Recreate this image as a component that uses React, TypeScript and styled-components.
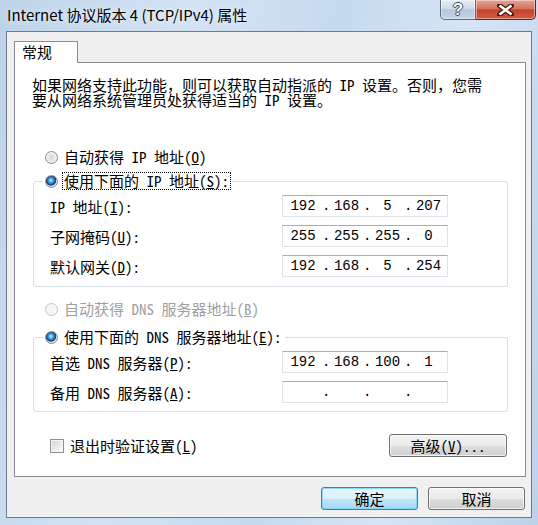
import styled, { createGlobalStyle } from 'styled-components';
import { Fragment } from 'react';
import type { ReactNode } from 'react';

const GlobalStyle = createGlobalStyle`
  html, body {
    margin: 0;
    padding: 0;
  }
  body {
    width: 538px;
    height: 525px;
    overflow: hidden;
    font-family: "Noto Sans Mono CJK SC", "Noto Sans CJK SC", sans-serif;
    font-size: 15px;
    color: #000;
  }
`;

const Frame = styled.div`
  width: 538px;
  height: 525px;
  box-sizing: border-box;
  display: flex;
  flex-direction: column;
  background: linear-gradient(100deg, #bdd3ea 0%, #d3e3f4 30%, #c6daef 55%, #d6e5f5 75%, #bcd2ea 100%);
`;

const TitleBar = styled.div`
  height: 31px;
  flex-shrink: 0;
  display: flex;
  align-items: flex-start;
`;

const Title = styled.div`
  padding: 5px 0 0 7px;
  font: 15px/20px "Noto Sans CJK SC", sans-serif;
  text-shadow: 0 0 6px rgba(255, 255, 255, 0.9);
`;

const CaptionButtons = styled.div`
  margin-left: auto;
  margin-right: 2px;
  display: flex;
`;

const CaptionButton = styled.div<{ $close?: boolean }>`
  width: ${(p) => (p.$close ? 60 : 36)}px;
  height: 20px;
  box-sizing: border-box;
  display: flex;
  align-items: center;
  justify-content: center;
  border: 1px solid ${(p) => (p.$close ? '#5a2418' : '#5c6b7e')};
  border-top: none;
  border-left: ${(p) => (p.$close ? 'none' : '1px solid #5c6b7e')};
  border-radius: ${(p) => (p.$close ? '0 0 5px 0' : '0 0 0 5px')};
  background: ${(p) =>
    p.$close
      ? 'linear-gradient(#e5a293 0%, #d6735e 45%, #c5432a 52%, #d05a40 100%)'
      : 'linear-gradient(#e4ecf5 0%, #cfdbe8 45%, #b6c8dc 52%, #c3d3e5 100%)'};
  box-shadow: inset 0 0 0 1px rgba(255, 255, 255, 0.45);
`;

const HelpGlyph = styled.span`
  font: bold 17px/20px "Liberation Sans", sans-serif;
  color: #fff;
  text-shadow: 1px 0 0 #3b4756, -1px 0 0 #3b4756, 0 1px 0 #3b4756, 0 -1px 0 #3b4756;
`;

const Client = styled.div`
  flex: 1;
  margin: 0 6px 7px 6px;
  border: 1px solid #6e7a89;
  background: #f0f0f0;
  padding: 9px 5px 0 7px;
  display: flex;
  flex-direction: column;
`;

const TabStrip = styled.div`
  display: flex;
`;

const Tab = styled.div`
  position: relative;
  z-index: 1;
  width: 64px;
  height: 22px;
  box-sizing: border-box;
  margin-bottom: -1px;
  padding-left: 7px;
  border: 1px solid #898c95;
  border-bottom: none;
  background: #fff;
  line-height: 20px;
`;

const Panel = styled.div`
  width: 512px;
  height: 415px;
  box-sizing: border-box;
  border: 1px solid #898c95;
  background: #fff;
  padding: 0 17px 0 18px;
  display: flex;
  flex-direction: column;
`;

const Intro = styled.p`
  margin: 14px 0 0 -1px;
  line-height: 15px;
  white-space: nowrap;
`;

const OptionRow = styled.div<{ $top: number }>`
  margin-top: ${(p) => p.$top}px;
  height: 20px;
  display: flex;
  align-items: center;
  padding-left: 12px;
`;

const Group = styled.fieldset<{ $top: number }>`
  margin: ${(p) => p.$top}px 0 0 0;
  padding: 0;
  border: 1px solid #d5dfe5;
  border-radius: 3px;
  min-width: 0;
`;

const GroupLegend = styled.legend`
  margin-left: 9px;
  padding: 0 2px;
  height: 18px;
  display: flex;
  align-items: center;
`;

const OptionLabel = styled.span<{ $disabled?: boolean }>`
  display: flex;
  align-items: center;
  gap: 5px;
  color: ${(p) => (p.$disabled ? '#a0a0a0' : '#000')};
  line-height: 16px;
  white-space: nowrap;
`;

const FocusText = styled.span<{ $focused?: boolean }>`
  padding: 0 1px;
  outline: ${(p) => (p.$focused ? '1px dotted #000' : 'none')};
`;

const RadioDot = styled.span<{ $checked?: boolean; $disabled?: boolean }>`
  width: 13px;
  height: 13px;
  box-sizing: border-box;
  border-radius: 50%;
  border: 1px solid ${(p) => (p.$disabled ? '#c4c4c4' : '#8a8a8a')};
  background: ${(p) =>
    p.$checked
      ? 'radial-gradient(circle at 45% 40%, #d4f2ff 0, #58b4f0 20%, #1d68b4 42%, #0d3c70 55%, #dcdcdc 62%, #fdfdfd 100%)'
      : p.$disabled
      ? 'radial-gradient(circle, #f2f2f2 0, #fbfbfb 100%)'
      : 'radial-gradient(circle at 50% 50%, #d6d6d6 0, #ececec 55%, #fdfdfd 100%)'};
  flex-shrink: 0;
`;

const FieldGrid = styled.div<{ $pt: number; $pb: number }>`
  display: grid;
  grid-template-columns: 232px 166px;
  row-gap: 8px;
  padding: ${(p) => p.$pt}px 0 ${(p) => p.$pb}px 16px;
`;

const FieldLabel = styled.span`
  display: flex;
  align-items: center;
  height: 22px;
  white-space: nowrap;
`;

const IpBox = styled.div`
  height: 22px;
  box-sizing: border-box;
  border: 1px solid #e2e3ea;
  border-top-color: #abadb3;
  background: #fff;
  padding-left: 1px;
  display: flex;
  align-items: center;
  font: 14px/20px "Liberation Mono", monospace;
`;

const Octet = styled.span<{ $width: number }>`
  width: ${(p) => p.$width}px;
  text-align: center;
`;

const Dot = styled.span`
  width: 8px;
  text-align: center;
`;

const BottomRow = styled.div`
  margin-top: 22px;
  height: 23px;
  display: flex;
  align-items: center;
  justify-content: space-between;
  padding: 0 1px 0 17px;
`;

const CheckLabel = styled.span`
  display: flex;
  align-items: center;
  gap: 6px;
  white-space: nowrap;
`;

const CheckBox = styled.span`
  width: 14px;
  height: 14px;
  box-sizing: border-box;
  border: 1px solid #8f8f8f;
  background: linear-gradient(135deg, #d0d0d0 0%, #e8e8e8 50%, #fbfbfb 100%);
  box-shadow: inset 0 0 0 1px #f4f4f4;
`;

const Button = styled.div<{ $width: number; $default?: boolean }>`
  width: ${(p) => p.$width}px;
  height: 23px;
  box-sizing: border-box;
  border: 1px solid ${(p) => (p.$default ? '#3c7fb1' : '#707070')};
  border-radius: 3px;
  background: ${(p) =>
    p.$default
      ? 'linear-gradient(#eaf6fd 0%, #d9f0fc 50%, #bee6fd 51%, #a7d9f5 100%)'
      : 'linear-gradient(#f2f2f2 0%, #ebebeb 50%, #dddddd 51%, #cfcfcf 100%)'};
  box-shadow: inset 0 0 0 1px ${(p) => (p.$default ? 'rgba(120, 210, 245, 0.8)' : 'rgba(255, 255, 255, 0.7)')};
  text-align: center;
  line-height: 21px;
  white-space: nowrap;
`;

const DialogButtons = styled.div`
  margin-top: 10px;
  display: flex;
  justify-content: flex-end;
  gap: 10px;
  padding-right: 1px;
`;

const Radio = ({
  children,
  checked,
  disabled,
  focused,
}: {
  children: ReactNode;
  checked?: boolean;
  disabled?: boolean;
  focused?: boolean;
}) => (
  <OptionLabel $disabled={disabled}>
    <RadioDot $checked={checked} $disabled={disabled} />
    <FocusText $focused={focused}>{children}</FocusText>
  </OptionLabel>
);

const IpField = ({ value }: { value: string[] }) => (
  <IpBox>
    {value.map((v, i) =>
      i === 0 ? (
        <Octet key={i} $width={38}>
          {v}
        </Octet>
      ) : (
        <Fragment key={i}>
          <Dot>.</Dot>
          <Octet $width={33}>{v}</Octet>
        </Fragment>
      )
    )}
  </IpBox>
);

const App = () => {
  return (
    <Frame>
      <GlobalStyle />
      <TitleBar>
        <Title>Internet 协议版本 4 (TCP/IPv4) 属性</Title>
        <CaptionButtons>
          <CaptionButton>
            <HelpGlyph>?</HelpGlyph>
          </CaptionButton>
          <CaptionButton $close>
            <svg width="17" height="12" viewBox="0 0 17 12">
              <path d="M2.5 1.5 L14.5 10.5 M14.5 1.5 L2.5 10.5" stroke="#4a1a10" strokeWidth="5" strokeLinecap="square" />
              <path d="M2.5 1.5 L14.5 10.5 M14.5 1.5 L2.5 10.5" stroke="#fff" strokeWidth="2.6" />
            </svg>
          </CaptionButton>
        </CaptionButtons>
      </TitleBar>
      <Client>
        <TabStrip>
          <Tab>常规</Tab>
        </TabStrip>
        <Panel>
          <Intro>
            如果网络支持此功能，则可以获取自动指派的 IP 设置。否则，您需
            <br />
            要从网络系统管理员处获得适当的 IP 设置。
          </Intro>

          <OptionRow $top={40}>
            <Radio>
              自动获得 IP 地址(<u>O</u>)
            </Radio>
          </OptionRow>

          <Group $top={5}>
            <GroupLegend>
              <Radio checked focused>
                使用下面的 IP 地址(<u>S</u>):
              </Radio>
            </GroupLegend>
            <FieldGrid $pt={5} $pb={9}>
              <FieldLabel>
                <span>
                  IP 地址(<u>I</u>):
                </span>
              </FieldLabel>
              <IpField value={['192', '168', '5', '207']} />
              <FieldLabel>
                <span>
                  子网掩码(<u>U</u>):
                </span>
              </FieldLabel>
              <IpField value={['255', '255', '255', '0']} />
              <FieldLabel>
                <span>
                  默认网关(<u>D</u>):
                </span>
              </FieldLabel>
              <IpField value={['192', '168', '5', '254']} />
            </FieldGrid>
          </Group>

          <OptionRow $top={12}>
            <Radio disabled>
              自动获得 DNS 服务器地址(<u>B</u>)
            </Radio>
          </OptionRow>

          <Group $top={9}>
            <GroupLegend>
              <Radio checked>
                使用下面的 DNS 服务器地址(<u>E</u>):
              </Radio>
            </GroupLegend>
            <FieldGrid $pt={5} $pb={8}>
              <FieldLabel>
                <span>
                  首选 DNS 服务器(<u>P</u>):
                </span>
              </FieldLabel>
              <IpField value={['192', '168', '100', '1']} />
              <FieldLabel>
                <span>
                  备用 DNS 服务器(<u>A</u>):
                </span>
              </FieldLabel>
              <IpField value={['', '', '', '']} />
            </FieldGrid>
          </Group>

          <BottomRow>
            <CheckLabel>
              <CheckBox />
              <span>
                退出时验证设置(<u>L</u>)
              </span>
            </CheckLabel>
            <Button $width={118}>
              高级(<u>V</u>)...
            </Button>
          </BottomRow>
        </Panel>
        <DialogButtons>
          <Button $width={97} $default>
            确定
          </Button>
          <Button $width={97}>取消</Button>
        </DialogButtons>
      </Client>
    </Frame>
  );
};

export default App;
